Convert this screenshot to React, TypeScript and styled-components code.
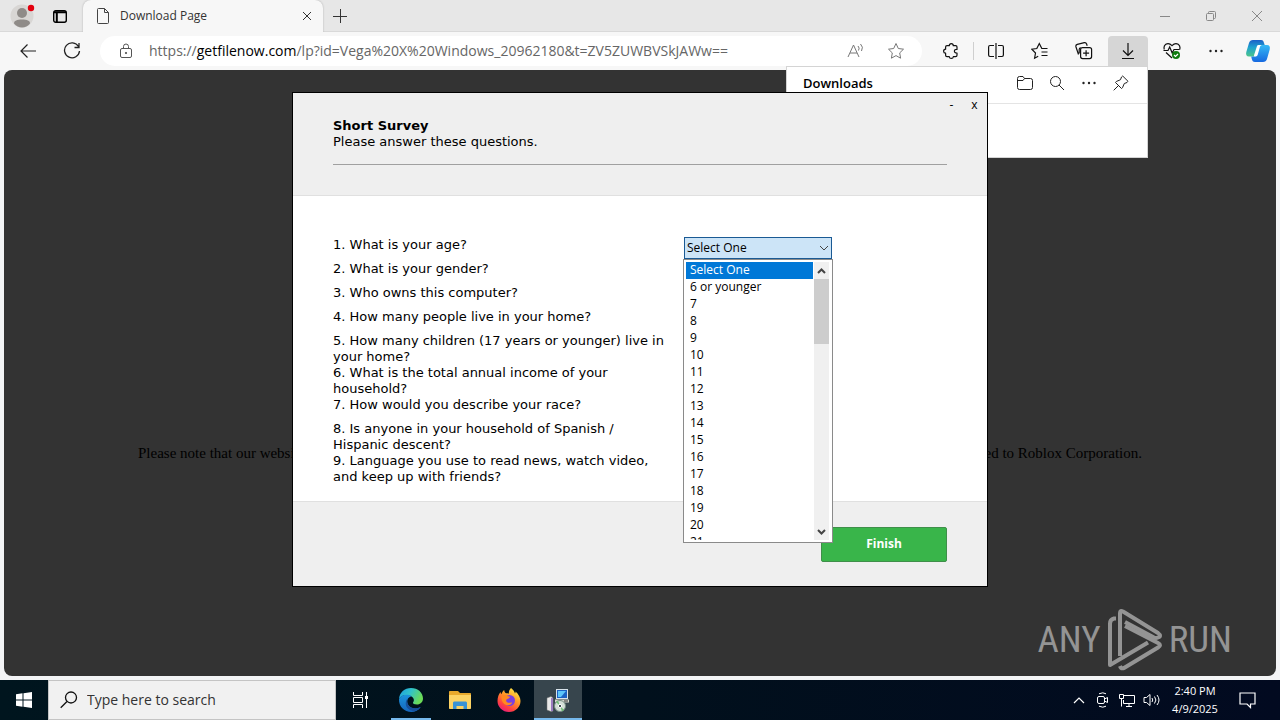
import React from "react";
import styled, { createGlobalStyle, css } from "styled-components";

const ui = `"Open Sans", "Noto Sans", sans-serif`;
const verdana = `Verdana, "DejaVu Sans", sans-serif`;

const GlobalStyle = createGlobalStyle`
  *, *::before, *::after { box-sizing: border-box; }
  body { margin: 0; font-family: ${ui}; font-size: 12px; color: #000; }
  button, input, select { font: inherit; color: inherit; margin: 0; padding: 0; border: 0; background: none; border-radius: 0; }
  svg { display: block; flex: none; }
`;

const Desktop = styled.div`
  position: relative;
  display: flex;
  flex-direction: column;
  min-height: 100vh;
  background: #f3f4f6;
  overflow: hidden;
`;

/* ---------- browser ---------- */

const TabStrip = styled.header`
  display: flex;
  align-items: center;
  height: 32px;
  background: #e7e7e7;
  box-shadow: inset 0 -1px #d9d9d9;
`;

const StripButton = styled.button<{ $width: number }>`
  display: flex;
  align-items: center;
  justify-content: center;
  width: ${(p) => p.$width}px;
  height: 32px;
`;

const Tab = styled.div`
  display: flex;
  align-items: center;
  gap: 9px;
  width: 240px;
  height: 32px;
  margin-left: 7px;
  padding: 0 8px 0 12px;
  border-radius: 8px 8px 0 0;
  background: #f7f7f7;
  box-shadow: 0 0 2px #aaa;
  clip-path: inset(0 -3px 0 -3px);
`;

const TabTitle = styled.span`
  flex: 1;
  font-size: 12px;
  line-height: 16px;
  color: #333;
  white-space: nowrap;
`;

const Spacer = styled.div`
  flex: 1;
`;

const Toolbar = styled.div`
  display: flex;
  align-items: center;
  height: 38px;
  padding: 0 2px 0 6px;
  background: #f7f7f7;
`;

const ToolButton = styled.button<{ $active?: boolean; $narrow?: boolean }>`
  display: flex;
  align-items: center;
  justify-content: center;
  width: ${(p) => (p.$narrow ? 40 : 44)}px;
  height: 30px;
  border-radius: 4px 4px 0 0;
  ${(p) => p.$active && css`width: 40px; margin: 0 2px; background: #d6d6d6;`}
`;

const AddressBar = styled.div`
  display: flex;
  flex: 1;
  align-items: center;
  height: 30px;
  margin: 0 7px 0 6px;
  padding: 0 6px 0 18px;
  border-radius: 15px;
  background: #fff;
`;

const Url = styled.a`
  flex: 1;
  margin-left: 15px;
  font-size: 14px;
  line-height: 20px;
  color: #666;
  text-decoration: none;
  white-space: nowrap;

  b { font-weight: 400; color: #000; }
`;

const AddressButton = styled.button`
  display: flex;
  align-items: center;
  justify-content: center;
  width: 40px;
  height: 28px;
`;

const Divider = styled.span`
  width: 1px;
  height: 18px;
  background: #cfcfcf;
`;

const WebPage = styled.main`
  display: flex;
  flex: 1;
  flex-direction: column;
  justify-content: center;
  margin: 0 4px 4px;
  padding: 160px 134px 0;
  border-radius: 8px;
  background: #333;
`;

const Notice = styled.p`
  display: flex;
  justify-content: space-between;
  margin: 0;
  font-family: "Liberation Serif", serif;
  font-size: 15px;
  line-height: 18px;
  color: #000;
  white-space: nowrap;
`;

const Flyout = styled.aside`
  position: absolute;
  top: 66px;
  right: 132px;
  width: 362px;
  height: 92px;
  border: 1px solid #d4d4d4;
  background: #fff;
`;

const FlyoutHeader = styled.div`
  display: flex;
  align-items: center;
  height: 37px;
  padding: 0 10px 4px 16px;
  border-bottom: 1px solid #e4e4e4;
`;

const FlyoutTitle = styled.h2`
  flex: 1;
  margin: 0;
  font-size: 13px;
  line-height: 20px;
  font-weight: 600;
`;

const FlyoutButton = styled.button`
  display: flex;
  align-items: center;
  justify-content: center;
  width: 32px;
  height: 28px;
`;

const Watermark = styled.div`
  position: absolute;
  right: 48px;
  bottom: 48px;
  display: flex;
  align-items: center;
  gap: 6px;
  color: #949494;
  font-family: "Roboto Condensed", "Liberation Sans Narrow", sans-serif;
  font-size: 37px;
  line-height: 64px;
`;

/* ---------- survey dialog ---------- */

const DialogLayer = styled.div`
  position: absolute;
  inset: 0 0 41px;
  display: flex;
  align-items: center;
  justify-content: center;
`;

const Dialog = styled.section`
  position: relative;
  width: 696px;
  border: 1px solid #000;
  background: #efefef;
  font-family: ${verdana};
  font-size: 13px;
  line-height: 16px;
`;

const WindowButtons = styled.div`
  position: absolute;
  top: 2px;
  right: 1px;
  display: flex;
`;

const WindowButton = styled.button`
  width: 23px;
  height: 20px;
  font-family: ${ui};
  font-size: 12px;
  line-height: 18px;
`;

const DialogHeader = styled.header`
  padding: 25px 40px 30px;
  border-bottom: 1px solid #e0e0e0;
`;

const Heading = styled.div`
  padding-bottom: 14px;
  border-bottom: 1px solid #a0a0a0;
`;

const Title = styled.h1`
  margin: 0;
  font-size: 13px;
  line-height: 16px;
  font-weight: 700;
`;

const Subtitle = styled.p`
  margin: 0;
`;

const Questions = styled.form`
  position: relative;
  padding: 41px 40px 16px;
  background: #fff;
`;

const Question = styled.div`
  display: flex;
  align-items: flex-start;
  min-height: 24px;
`;

const Label = styled.label`
  width: 351px;
  padding-right: 15px;
`;

const Picker = styled.div<{ $open?: boolean }>`
  position: relative;
  display: flex;
  width: 148px;
  height: 22px;
  border: 1px solid ${(p) => (p.$open ? "#1a5a94" : "#adadad")};
  background: ${(p) => (p.$open ? "#cce4f7" : "#e1e1e1")};

  select {
    width: 100%;
    padding: 0 20px 0 2px;
    appearance: none;
    outline: 0;
    font-family: ${ui};
    font-size: 12px;
    line-height: 20px;
  }
  svg { position: absolute; top: 7px; right: 2px; pointer-events: none; }
`;

const DropList = styled.div`
  position: absolute;
  z-index: 1;
  top: 63px;
  left: 390px;
  display: flex;
  gap: 1px;
  width: 150px;
  height: 284px;
  padding: 2px 3px 2px 2px;
  border: 1px solid #8a8a8a;
  background: #fff;
`;

const Options = styled.ul`
  flex: 1;
  margin: 0;
  padding: 0;
  overflow: hidden;
  list-style: none;
  font-family: ${ui};
  font-size: 12px;
`;

const Option = styled.li<{ $selected?: boolean }>`
  height: 17px;
  padding-left: 4px;
  line-height: 16px;
  ${(p) => p.$selected && css`background: #0078d7; color: #fff;`}
`;

const ScrollTrack = styled.div`
  display: flex;
  flex-direction: column;
  width: 15px;
  background: #f0f0f0;
`;

const ScrollArrow = styled.button`
  display: flex;
  align-items: center;
  justify-content: center;
  width: 15px;
  height: 17px;
`;

const ScrollThumb = styled.div`
  height: 65px;
  background: #cdcdcd;
`;

const DialogFooter = styled.footer`
  display: flex;
  justify-content: flex-end;
  padding: 25px 40px 24px;
  border-top: 1px solid #e0e0e0;
`;

const FinishButton = styled.button`
  width: 126px;
  height: 35px;
  padding-bottom: 2px;
  border: 1px solid #3f8f4a;
  border-radius: 2px;
  background: #39b54a;
  color: #fff;
  font-family: ${ui};
  font-size: 12px;
  font-weight: 700;
`;

/* ---------- taskbar ---------- */

const Taskbar = styled.footer`
  position: relative;
  display: flex;
  align-items: center;
  height: 40px;
  background: linear-gradient(90deg, #00151e, #01101c 50%, #020a20);
  color: #fff;
`;

const TaskButton = styled.button<{ $active?: boolean; $running?: boolean }>`
  position: relative;
  display: flex;
  align-items: center;
  justify-content: center;
  width: 48px;
  height: 40px;
  background: ${(p) => (p.$active ? "#37454d" : "transparent")};

  &::after {
    content: "";
    position: absolute;
    bottom: 0;
    left: ${(p) => (p.$active ? 0 : 4)}px;
    right: ${(p) => (p.$active ? 0 : 4)}px;
    height: 2px;
    background: ${(p) => (p.$active || p.$running ? "#76b9ed" : "transparent")};
  }
`;

const PinnedApps = styled.nav`
  display: flex;
  gap: 1px;
  margin-left: 3px;
`;

const Search = styled.label`
  display: flex;
  align-items: center;
  gap: 9px;
  width: 288px;
  height: 40px;
  padding: 0 11px;
  border: 1px solid #c4c4c4;
  background: #f1f1f1;
  color: #000;

  input {
    flex: 1;
    min-width: 0;
    outline: 0;
    font-size: 14px;
    line-height: 20px;
  }
  input::placeholder { color: #333; opacity: 1; }
`;

const TrayButton = styled.button`
  display: flex;
  align-items: center;
  justify-content: center;
  width: 24px;
  height: 40px;
`;

const Clock = styled.time`
  width: 64px;
  font-size: 11px;
  line-height: 18px;
  text-align: center;
  white-space: nowrap;
`;

const NoticeButton = styled(TrayButton)`
  width: 40px;
  margin-right: 13px;
`;

/* ---------- icons ---------- */

type IconProps = { w?: number; h?: number; color?: string; sw?: number; children: React.ReactNode };

const Icon = ({ w = 16, h = w, color = "#222", sw = 1, children }: IconProps) => (
  <svg width={w} height={h} viewBox={`0 0 ${w} ${h}`} fill="none" stroke={color} strokeWidth={sw} aria-hidden="true">
    {children}
  </svg>
);

const Dots = () => (
  <Icon w={16}>
    <g fill="#222" stroke="none">
      <circle cx="2.5" cy="8" r="1.2" /><circle cx="8" cy="8" r="1.2" /><circle cx="13.5" cy="8" r="1.2" />
    </g>
  </Icon>
);

const Profile = () => (
  <svg width="28" height="28" viewBox="0 0 28 28" aria-hidden="true">
    <circle cx="14" cy="14" r="11.5" fill="#d8d6d4" />
    <circle cx="14" cy="11" r="5" fill="#8f8b88" />
    <path d="M6 21.500c0-3 3-4 8-4s8 1 8 4c-2 2.700-5 4-8 4s-6-1.300-8-4z" fill="#8f8b88" />
    <circle cx="23" cy="6" r="3.200" fill="#e3000f" />
  </svg>
);

const Copilot = () => (
  <svg width="26" height="24" viewBox="0 0 26 24" aria-hidden="true">
    <defs>
      <linearGradient id="cpA" x1="0" y1="0" x2="0" y2="1">
        <stop offset="0" stopColor="#1b5fc8" /><stop offset=".45" stopColor="#1fa3cf" /><stop offset="1" stopColor="#4dc58a" />
      </linearGradient>
      <linearGradient id="cpB" x1="0" y1="0" x2="0" y2="1">
        <stop offset="0" stopColor="#35b9f5" /><stop offset="1" stopColor="#1769e0" />
      </linearGradient>
    </defs>
    <path d="M8 1h8c2 0 2.500 1 3 3l.7 2h-3c-2 0-3 1-3.500 3l-1.700 6c-.5 1.600-1.500 2.500-3 2.500H4C1.500 17.500.6 15.500 1.300 13L4 4c.6-2 2-3 4-3z" fill="url(#cpA)" />
    <path d="M18 23h-8c-2 0-2.700-1-3.200-3L6.200 17.500h2.600c2 0 3-1 3.500-3l1.800-6c.5-1.700 1.500-2.500 3-2.500H22c2.500 0 3.400 2 2.700 4.500L22 20c-.6 2-2 3-4 3z" fill="url(#cpB)" />
    <path d="M12 7q.4-1 1.500-1h3q-1.200.6-1.600 2L12.800 15.500q-.5 1.800-2 2H9.600q-1-.2-.5-1.500z" fill="#fff" />
  </svg>
);

const Edge = () => (
  <svg width="26" height="26" viewBox="0 0 26 26" aria-hidden="true">
    <defs>
      <linearGradient id="edA" x1="0" y1="0" x2="1" y2=".4">
        <stop offset="0" stopColor="#1b9de2" /><stop offset=".5" stopColor="#31c3c9" /><stop offset="1" stopColor="#6bdc57" />
      </linearGradient>
      <linearGradient id="edB" x1="0" y1="0" x2="0" y2="1">
        <stop offset="0" stopColor="#1c93dc" /><stop offset="1" stopColor="#1565bd" />
      </linearGradient>
    </defs>
    <path d="M1 12C1.500 5.500 6.500 1 13 1c7 0 12 4.800 12 10.500 0 3.500-2.700 6-6 6-2.800 0-4.300-1-4-2 1.300-1.500 1.200-3.500-.2-5C12 7 3.500 7 1 12z" fill="url(#edA)" />
    <path d="M1 12C3 7.500 10 6.500 13.600 9.200 9.500 10 8.300 14 10 17.500c2 4 7.500 5.300 12.700 2.500C20.500 23.500 17 25 13.500 25 6 25 .7 19.500 1 12z" fill="url(#edB)" />
    <path d="M9.700 11.500C7 14 7 19.500 10.500 22c2 1.600 4.500 2.200 6.500 2 2.500-.7 4.500-2 5.700-4-5.700 2.500-10.700 1-12.700-2.500-1-2-1.200-4-.3-6z" fill="#174f9c" />
  </svg>
);

const Explorer = () => (
  <svg width="22" height="20" viewBox="0 0 22 20" aria-hidden="true">
    <path d="M0 2c0-.6.4-1 1-1h8l2 2h10c.6 0 1 .4 1 1v14H0z" fill="#e8a92c" />
    <path d="M0 5h22v13c0 .6-.4 1-1 1H1c-.6 0-1-.4-1-1z" fill="#fcd364" />
    <path d="M4 19v-6c0-1 .7-1.500 1.500-1.500h11c.8 0 1.500.5 1.500 1.500v6h-3.500v-3h-7v3z" fill="#3a93d4" />
  </svg>
);

const Firefox = () => (
  <svg width="24" height="26" viewBox="0 0 24 26" aria-hidden="true">
    <defs>
      <linearGradient id="ffA" x1=".8" y1="0" x2=".2" y2="1">
        <stop offset="0" stopColor="#fff04a" /><stop offset=".4" stopColor="#ff9a26" /><stop offset=".75" stopColor="#ff4040" /><stop offset="1" stopColor="#e31587" />
      </linearGradient>
    </defs>
    <path d="M14 1c2 1.500 3.500 3.500 4 5.500.5-.5.600-1.300.5-2C21.500 7 23.500 10.500 23.500 14 23.500 20 18.500 25 12 25S.5 20 .5 14c0-3.700 1.300-7 3-9 .2 1 .4 1.800.9 2.300C5 5.500 6 4 7.200 3c0 1.600.8 2.600 1.800 3.300 1.500 0 2 .1 2.700.5C11.700 4.500 12.500 2.500 14 1z" fill="url(#ffA)" />
    <circle cx="12.500" cy="13.500" r="5.500" fill="#7a3fe0" />
    <path d="M4.500 9c2-1.500 4.500-1 6 0 1.200.2 2 .5 2.500 1-.5 1.500-2.500 1.500-3.500 2.500-.7 1-.2 2.500 1 3 2 .8 3-.5 4.700 0-1 2.300-3.500 3.300-6 2.500C6 17 4 13 4.500 9z" fill="#ff8a1f" />
  </svg>
);

const Installer = () => (
  <svg width="24" height="24" viewBox="0 0 24 24" aria-hidden="true">
    <rect x="10.500" y="1.500" width="11" height="9" fill="#1c62c4" stroke="#d8e2ea" />
    <path d="M12 3h8l-5 6h-3z" fill="#5cc5fa" />
    <path d="M9 11.500h14v3H9z" fill="#d6d6ce" /><path d="M18 12.500h4v1h-4z" fill="#333" />
    <path d="M1 10l4-1.500 2 1.500v13l-2 .5L1 22z" fill="#e8e8e8" stroke="#777" strokeWidth=".5" />
    <path d="M5 10h2v13H5z" fill="#9b7cc0" />
    <circle cx="14" cy="18" r="5.500" fill="#d5dfd8" stroke="#758c83" />
    <path d="M14 18l-4-4 2-1.200zM14 18l4 4-2 1.200z" fill="#6fbf73" />
    <circle cx="14" cy="18" r="1.600" fill="#22343a" stroke="#fff" />
  </svg>
);

const AnyRunMark = () => (
  <svg width="56" height="64" viewBox="0 0 56 64" fill="none" stroke="#949494" strokeWidth="4" strokeLinejoin="round" aria-hidden="true">
    <path d="M9 10.500H7q-4 1-4 5V57L41 34.500" />
    <path d="M13 48V5q0-3 3-1.500L51 25q4 3 0 4.500-2 1-4 0L18 14" />
    <path d="M18 18l33 17q4 2 0 4.500L17 60q-3 1-4-2" />
  </svg>
);

/* ---------- data ---------- */

const questions = [
  "What is your age?",
  "What is your gender?",
  "Who owns this computer?",
  "How many people live in your home?",
  "How many children (17 years or younger) live in your home?",
  "What is the total annual income of your household?",
  "How would you describe your race?",
  "Is anyone in your household of Spanish / Hispanic descent?",
  "Language you use to read news, watch video, and keep up with friends?",
];

const ages = ["Select One", "6 or younger", ...Array.from({ length: 15 }, (_, i) => String(i + 7))];

const Chevron = () => (
  <Icon w={10} h={7} color="#444"><path d="M1 1l4 4 4-4" /></Icon>
);

/* ---------- page ---------- */

const Browser = () => (
  <>
    <TabStrip>
      <StripButton $width={44} aria-label="Profile"><Profile /></StripButton>
      <StripButton $width={32} aria-label="Tab actions">
        <Icon w={14} color="#000" sw={1.400}><rect x=".7" y="1.700" width="12.600" height="11.600" rx="2" /><path d="M1 3.200h12M3.800 4v9" strokeWidth="2" /></Icon>
      </StripButton>
      <Tab>
        <Icon w={16} color="#444"><path d="M2.500 1.500q0-1 1-1h6l4 4v10q0 1-1 1h-9q-1 0-1-1zM9.500.5v4h4" /></Icon>
        <TabTitle>Download Page</TabTitle>
        <StripButton $width={16} aria-label="Close tab">
          <Icon w={10} color="#333"><path d="M1 1l8 8M9 1L1 9" /></Icon>
        </StripButton>
      </Tab>
      <StripButton $width={34} aria-label="New tab">
        <Icon w={14} color="#333"><path d="M7.500 0v14M0 7.500h14" /></Icon>
      </StripButton>
      <Spacer />
      <StripButton $width={46} aria-label="Minimize"><Icon w={10} color="#888"><path d="M0 5.500h10" /></Icon></StripButton>
      <StripButton $width={46} aria-label="Restore">
        <Icon w={10} color="#888"><rect x=".5" y="2.500" width="7" height="7" rx="1" /><path d="M2.500 2.500v-1q0-1 1-1h5q1 0 1 1v5q0 1-1 1h-1" /></Icon>
      </StripButton>
      <StripButton $width={46} aria-label="Close"><Icon w={10} color="#888"><path d="M0 0l10 10M10 0L0 10" /></Icon></StripButton>
    </TabStrip>

    <Toolbar>
      <ToolButton aria-label="Back"><Icon color="#222" sw={1.200}><path d="M16 8H1M7.500 1.500L1 8l6.500 6.500" /></Icon></ToolButton>
      <ToolButton aria-label="Refresh"><Icon w={18} color="#222" sw={1.300}><path d="M15.500 4.500A7.500 7.500 0 1 0 16.500 9M16 1v4.500h-4.500" /></Icon></ToolButton>
      <AddressBar>
        <Icon color="#555"><rect x="2.500" y="5.500" width="11" height="9" rx="1.500" /><path d="M5.500 5.500v-2q0-2.500 2.500-2.500t2.500 2.500v2" /><circle cx="8" cy="10" r=".7" fill="#555" /></Icon>
        <Url href="#page">https://<b>getfilenow.com</b>/lp?id=Vega%20X%20Windows_20962180&amp;t=ZV5ZUWBVSkJAWw==</Url>
        <AddressButton aria-label="Read aloud">
          <Icon w={18} color="#777"><path d="M1 15L6.500 3 12 15M3 11h7" /><path d="M11 4q2 2 .5 4.500M13.500 2q3.300 3 1 7" /></Icon>
        </AddressButton>
        <AddressButton aria-label="Favorite">
          <Icon w={18} color="#777"><path d="M9 1.500l2.300 5 5.200.7-3.800 3.700.9 5.300L9 13.600l-4.600 2.600.9-5.300L1.500 7.200l5.200-.7z" strokeLinejoin="round" /></Icon>
        </AddressButton>
      </AddressBar>
      <ToolButton aria-label="Extensions">
        <Icon color="#111" sw={1.200}><path d="M4 2.700h2.300Q6.300.6 8.300.6t2 2.100h2.300q1.400 0 1.400 1.400v2.300q-2.600-.1-2.600 1.800T14 10v2.300q0 1.400-1.400 1.400h-2.300q-.2 1.700-2 1.700t-2-1.700H4q-1.400 0-1.400-1.400V10.200Q.6 10.100.6 8.200t2-2V4.100q0-1.400 1.400-1.400z" strokeLinejoin="round" /></Icon>
      </ToolButton>
      <Divider />
      <ToolButton aria-label="Split screen">
        <Icon color="#111" sw={1.200}><path d="M6 2.500H2q-1.400 0-1.400 1.400v8.200q0 1.400 1.400 1.400h4M10 2.500h4q1.400 0 1.400 1.400v8.200q0 1.400-1.400 1.400h-4M8 0v16" /></Icon>
      </ToolButton>
      <ToolButton aria-label="Favorites">
        <Icon w={18} color="#111" sw={1.200}><path d="M16.500 6.500H10.800L8.300 1.500l-2.500 5-5 .7L4.500 11l-.9 5.200 3.600-1.900M10.500 10h6M10.500 13.500h6" /></Icon>
      </ToolButton>
      <ToolButton aria-label="Collections">
        <Icon w={18} color="#111" sw={1.200}><rect x="5.600" y="5.600" width="11" height="11" rx="2" /><path d="M11.100 8.200v6M8.100 11.200h6M3.500 12.500L1 5q-.6-2 1.300-2.600l7-1.700q1.700-.4 2.300 1.300l.6 1.800M5.700 5.600q-1.500.5-1.500 2v4" /></Icon>
      </ToolButton>
      <ToolButton $active aria-label="Downloads">
        <Icon w={14} h={18} color="#111" sw={1.200}><path d="M7 1v12M2 8.500l5 5 5-5M1 16.500h12" /></Icon>
      </ToolButton>
      <ToolButton aria-label="Browser essentials">
        <Icon w={18} color="#111" sw={1.200}><path d="M1.300 7.500Q.3 4 2.800 2.200 6 .5 9 3.600q3-3.100 6.200-1.400 2.500 1.800 1.500 5.300M.5 8.500H5l1.700-3.500 2.500 6 1.800-3.500h5.500M3 10.500L9 16" /><circle cx="13" cy="13" r="4" fill="#107c10" stroke="none" /><path d="M11 13l1.500 1.500L15 12" stroke="#fff" /></Icon>
      </ToolButton>
      <ToolButton aria-label="Settings"><Dots /></ToolButton>
      <ToolButton $narrow aria-label="Copilot"><Copilot /></ToolButton>
    </Toolbar>

    <WebPage id="page">
      <Notice><span>Please note that our website is</span><span>related to Roblox Corporation.</span></Notice>
    </WebPage>

    <Flyout>
      <FlyoutHeader>
        <FlyoutTitle>Downloads</FlyoutTitle>
        <FlyoutButton aria-label="Open folder"><Icon><path d="M.5 3.500q0-2 2-2H6l1.500 2h6q2 0 2 2v7q0 2-2 2h-11q-2 0-2-2zM.5 5.500H6l1.500-2" /></Icon></FlyoutButton>
        <FlyoutButton aria-label="Search downloads"><Icon><circle cx="6.500" cy="6.500" r="5" /><path d="M10 10l5 5" /></Icon></FlyoutButton>
        <FlyoutButton aria-label="More options"><Dots /></FlyoutButton>
        <FlyoutButton aria-label="Pin"><Icon><path d="M9.700 1l5.300 5.300-1 1.200-2.700 1-1.800 4.200-1 .8-6-6 .8-1 4.200-1.800 1-2.700zM5.500 10.500L.7 15.300" /></Icon></FlyoutButton>
      </FlyoutHeader>
    </Flyout>

    <Watermark><span>ANY</span><AnyRunMark /><span>RUN</span></Watermark>
  </>
);

const Survey = () => (
  <DialogLayer>
    <Dialog role="dialog" aria-labelledby="survey-title">
      <WindowButtons>
        <WindowButton>-</WindowButton>
        <WindowButton>x</WindowButton>
      </WindowButtons>
      <DialogHeader>
        <Heading>
          <Title id="survey-title">Short Survey</Title>
          <Subtitle>Please answer these questions.</Subtitle>
        </Heading>
      </DialogHeader>
      <Questions id="survey">
        {questions.map((text, i) => (
          <Question key={text}>
            <Label htmlFor={`q${i + 1}`}>{`${i + 1}. ${text}`}</Label>
            <Picker $open={i === 0}>
              <select id={`q${i + 1}`}>{i === 0 && <option>Select One</option>}</select>
              <Chevron />
            </Picker>
          </Question>
        ))}
        <DropList>
          <Options role="listbox" aria-label="Age">
            {ages.map((age, i) => (
              <Option key={age} role="option" aria-selected={i === 0} $selected={i === 0}>{age}</Option>
            ))}
          </Options>
          <ScrollTrack>
            <ScrollArrow type="button" aria-label="Scroll up"><Icon w={9} h={6} color="#444" sw={2}><path d="M1 5l3.500-3.500L8 5" /></Icon></ScrollArrow>
            <ScrollThumb />
            <Spacer />
            <ScrollArrow type="button" aria-label="Scroll down"><Icon w={9} h={6} color="#444" sw={2}><path d="M1 1l3.500 3.500L8 1" /></Icon></ScrollArrow>
          </ScrollTrack>
        </DropList>
      </Questions>
      <DialogFooter>
        <FinishButton form="survey">Finish</FinishButton>
      </DialogFooter>
    </Dialog>
  </DialogLayer>
);

export default function App() {
  return (
    <Desktop>
      <GlobalStyle />
      <Browser />
      <Survey />
      <Taskbar>
        <TaskButton aria-label="Start">
          <svg width="16" height="16" viewBox="0 0 16 16" fill="#fff" aria-hidden="true"><path d="M0 2.200L6.500 1.300V7.500H0zM7.500 1.200L16 0v7.500H7.500zM0 8.500h6.500v6.200L0 13.800zM7.500 8.500H16V16l-8.500-1.200z" /></svg>
        </TaskButton>
        <Search>
          <Icon w={18} color="#111" sw={1.300}><circle cx="11" cy="6.500" r="5.500" /><path d="M7 10.500L.7 16.800" /></Icon>
          <input type="text" placeholder="Type here to search" aria-label="Search" />
        </Search>
        <TaskButton aria-label="Task view">
          <Icon color="#fff" w={17} h={16}><path d="M1.500 0v3.500h9V0M1.500 16v-3.500h9V16M1.500 5.500h9v5h-9zM14.500 0v16" /><path d="M13 5.500h3" strokeWidth="3" /></Icon>
        </TaskButton>
        <PinnedApps>
          <TaskButton $running aria-label="Edge"><Edge /></TaskButton>
          <TaskButton aria-label="File Explorer"><Explorer /></TaskButton>
          <TaskButton aria-label="Firefox"><Firefox /></TaskButton>
          <TaskButton $active aria-label="Setup"><Installer /></TaskButton>
        </PinnedApps>
        <Spacer />
        <TrayButton aria-label="Show hidden icons"><Icon w={12} h={8} color="#fff" sw={1.200}><path d="M1 7l5-5 5 5" /></Icon></TrayButton>
        <TrayButton aria-label="Meet now"><Icon w={14} h={16} color="#fff"><rect x="1.500" y="4.500" width="7" height="7" rx="1.500" /><path d="M8.500 7l3-1.500v5l-3-1.500M3 1.800q4-2 7 0M3 14.200q4 2 7 0" /></Icon></TrayButton>
        <TrayButton aria-label="Network"><Icon w={17} h={16} color="#fff"><path d="M5 3.500h10.500v8h-11V8M10 11.500v3M7 14.500h6M.5 2.500h4v4h-4zM2.500 6.500v8" /></Icon></TrayButton>
        <TrayButton aria-label="Volume"><Icon w={17} h={16} color="#fff"><path d="M1 5.500h2.500l3.500-3v11l-3.500-3H1zM9 6q1.500 2 0 4M11.500 4.500q2.800 3.500 0 7M14 3q4 5 0 10" /></Icon></TrayButton>
        <Clock>2:40 PM<br />4/9/2025</Clock>
        <NoticeButton aria-label="Notifications"><Icon w={17} h={18} color="#fff" sw={1.200}><path d="M1 2h15v11h-4.500v3.500L8 13H1z" /></Icon></NoticeButton>
      </Taskbar>
    </Desktop>
  );
}
